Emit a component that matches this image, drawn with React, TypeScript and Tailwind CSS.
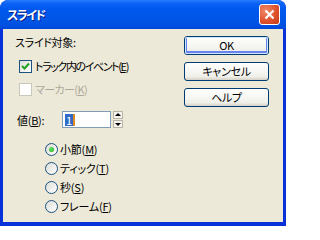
const font = "[font-family:'Noto_Sans_CJK_JP','Liberation_Sans',sans-serif] [font-feature-settings:'palt']";

const CheckBox = ({ checked, disabled }: { checked?: boolean; disabled?: boolean }) => (
  <div
    className={
      "w-[13px] h-[13px] border flex items-center justify-center shrink-0 " +
      (disabled
        ? "border-[#cac8bb] bg-white"
        : "border-[#1c5180] bg-[linear-gradient(135deg,#dcdcd7,#ffffff)]")
    }
  >
    {checked && (
      <svg width="9" height="9" viewBox="0 0 9 9">
        <path d="M1 4 L3.5 6.5 L8 1.5" stroke="#21a121" strokeWidth="2" fill="none" />
      </svg>
    )}
  </div>
);

const Radio = ({ checked }: { checked?: boolean }) => (
  <div className="w-[13px] h-[13px] rounded-full border border-[#1c5180] bg-[linear-gradient(135deg,#dcdcd7,#ffffff)] flex items-center justify-center shrink-0">
    {checked && <div className="w-[5px] h-[5px] rounded-full bg-[radial-gradient(circle_at_40%_40%,#5de85d,#21a121)]" />}
  </div>
);

const Button = ({ label, focused }: { label: string; focused?: boolean }) => (
  <div className="w-[85px] h-[19px] rounded-[3px] border border-[#003c74] bg-[linear-gradient(to_bottom,#ffffff,#f0f0ea_80%,#d6d0c5)] flex items-center justify-center">
    <div
      className={
        "w-full h-full rounded-[2px] flex items-center justify-center text-[11px] leading-none text-black " +
        (focused ? "shadow-[inset_0_0_0_1px_#cee7ff,inset_0_-1px_0_2px_#6982ee]" : "")
      }
    >
      {label}
    </div>
  </div>
);

const u = (c: string) => <span className="underline underline-offset-1">{c}</span>;

export default function App() {
  return (
    <div className={"w-[286px] h-[226px] bg-[#0831d9] rounded-t-[8px] flex flex-col overflow-hidden " + font}>
      <div className="h-[29px] shrink-0 rounded-t-[8px] bg-[linear-gradient(to_bottom,#2a7cff_0%,#0a63f5_12%,#0058ee_30%,#0055e5_70%,#0050e0_90%,#0046d8_100%)] flex items-center pl-[7px] pr-[6px]">
        <span className="text-white font-bold text-[12px] tracking-[-1.5px] leading-none [text-shadow:1px_1px_0_#0a1e80]">スライド</span>
        <div className="ml-auto w-[21px] h-[21px] rounded-[3px] border border-white bg-[radial-gradient(circle_at_30%_30%,#f08a6a,#e0522e_55%,#c43a18)] flex items-center justify-center">
          <svg width="11" height="11" viewBox="0 0 11 11">
            <path d="M1.5 1.5 L9.5 9.5 M9.5 1.5 L1.5 9.5" stroke="white" strokeWidth="2.2" />
          </svg>
        </div>
      </div>
      <div className="flex-1 mx-[3px] mb-[4px] bg-[#ece9d8] flex text-[11px] tracking-[-0.3px] leading-[14px] text-black">
        <div className="flex flex-col pl-[12px] pt-[6px]">
          <div>スライド対象:</div>
          <div className="flex items-center mt-[10px] ml-[4px] gap-[3px]">
            <CheckBox checked />
            <span className="tracking-[-1.4px]">トラック内のイベント({u("E")})</span>
          </div>
          <div className="flex items-center mt-[9px] ml-[4px] gap-[3px] text-[#aca899]">
            <CheckBox disabled />
            <span className="tracking-[-0.6px]">マーカー({u("K")})</span>
          </div>
          <div className="flex items-center mt-[15px] ml-[2px]">
            <span className="w-[45px]">値({u("B")}):</span>
            <div className="w-[49px] h-[17px] border border-[#7f9db9] bg-white flex items-center pl-[2px]">
              <span className="bg-[#316ac5] text-white px-[1px] leading-[12px]">1</span>
              <span className="w-[2px] h-[12px] bg-[#e08a20]" />
            </div>
            <div className="ml-[2px] w-[10px] h-[17px] flex flex-col gap-[1px]">
              <div className="flex-1 border border-[#b8b5a6] bg-[#f4f3ee] flex items-center justify-center">
                <svg width="6" height="4" viewBox="0 0 6 4"><path d="M3 0 L6 3 L0 3 Z" fill="black" /></svg>
              </div>
              <div className="flex-1 border border-[#b8b5a6] bg-[#f4f3ee] flex items-center justify-center">
                <svg width="6" height="4" viewBox="0 0 6 4"><path d="M0 1 L6 1 L3 4 Z" fill="black" /></svg>
              </div>
            </div>
          </div>
          <div className="flex flex-col ml-[30px] mt-[14px] gap-[5px] tracking-[-0.2px]">
            <div className="flex items-center gap-[2px]"><Radio checked /><span>小節({u("M")})</span></div>
            <div className="flex items-center gap-[2px]"><Radio /><span>ティック({u("T")})</span></div>
            <div className="flex items-center gap-[2px]"><Radio /><span>秒({u("S")})</span></div>
            <div className="flex items-center gap-[2px]"><Radio /><span>フレーム({u("F")})</span></div>
          </div>
        </div>
        <div className="ml-auto pr-[14px] pt-[7px] flex flex-col gap-[7px]">
          <Button label="OK" focused />
          <Button label="キャンセル" />
          <Button label="ヘルプ" />
        </div>
      </div>
    </div>
  );
}
